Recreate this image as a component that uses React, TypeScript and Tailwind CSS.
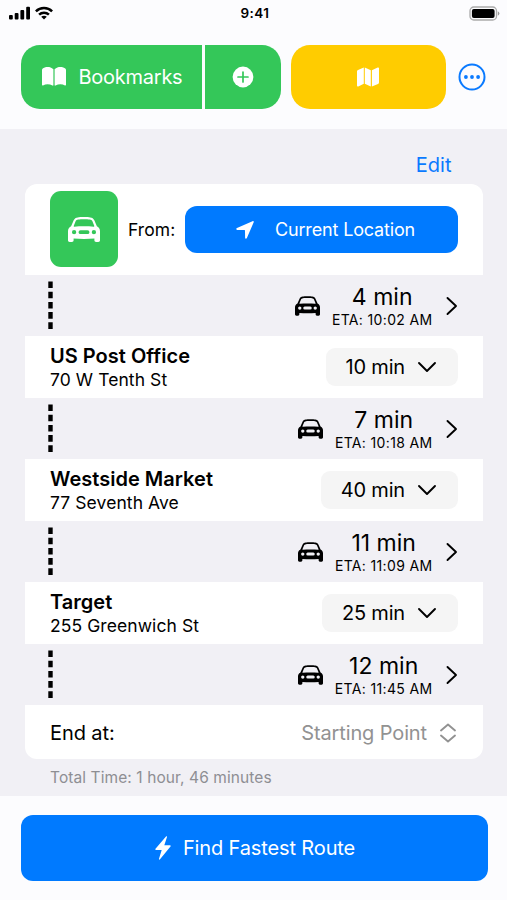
import React from "react";

function CarIcon({ className }: { className: string }) {
  return (
    <svg viewBox="0 0 32 25" className={className} fill="currentColor">
      <path
        fillRule="evenodd"
        d="M9.800 .4C12 0 20 0 22.200 .4c2 .3 3.300 1.100 4 2.700L28.900 9.300C31.200 10.700 32 12 32 14.500V23.200c0 1-.7 1.700-1.700 1.700h-2.200c-1 0-1.700-.7-1.700-1.700v-1.700C20 22 12 22 5.600 21.500v1.700c0 1-.7 1.700-1.700 1.700H1.700C.7 24.900 0 24.200 0 23.200V14.500C0 12 .8 10.700 3.100 9.300L5.800 3.100C6.500 1.500 7.800 .7 9.800 .4ZM10.300 2.500C8.800 2.700 8.100 3.100 7.700 4.100L5.700 9.100c-.1.500.2.700.700.650C12 9.100 20 9.100 25.600 9.750c.5.050.8-.15.700-.65L24.300 4.100c-.4-1-1.100-1.400-2.600-1.600C19 2.200 13 2.200 10.300 2.500ZM6.100 13a2.150 2.150 0 1 0 0 4.300a2.150 2.150 0 1 0 0-4.300ZM12.500 13.200a1.950 1.950 0 0 0 0 3.900H19.500a1.950 1.950 0 0 0 0-3.900ZM25.900 13a2.150 2.150 0 1 0 0 4.300a2.150 2.150 0 1 0 0-4.300Z"
      />
    </svg>
  );
}

function StatusBar() {
  return (
    <div className="grid h-[28px] grid-cols-3 items-center pr-[7px] pl-[9px]">
      <div className="-mt-[2px] flex items-center gap-[5px]">
        <svg viewBox="0 0 22 14" className="h-[14px] w-[22px]">
          <rect x="0" y="9" width="3.800" height="4.500" rx="1" />
          <rect x="5.700" y="7" width="3.800" height="6.500" rx="1" />
          <rect x="11.400" y="4" width="3.800" height="9.500" rx="1" />
          <rect x="17.200" y="0.800" width="3.800" height="12.700" rx="1" />
        </svg>
        <svg viewBox="0 0 18 14" className="-ml-px h-[14px] w-[18px]" fill="none" stroke="#000" strokeWidth="2.500">
          <path d="M.9 5.300C5.300.9 12.700.9 17.100 5.300" />
          <path d="M4.100 8.600c2.700-2.600 7.100-2.600 9.800 0" />
          <path d="M9 13.600 6.200 10.700c1.600-1.400 4-1.400 5.600 0Z" fill="#000" stroke="none" />
        </svg>
      </div>
      <div className="pl-px text-center text-[13.500px] leading-none font-semibold tracking-[0.4px]">9:41</div>
      <svg viewBox="0 0 31 15" className="-mt-[2px] h-[15px] w-[31px] justify-self-end">
        <rect x="1" y="1" width="26.500" height="13" rx="3.800" fill="none" stroke="#aaa" strokeWidth="1.300" />
        <rect x="2.900" y="2.900" width="22.700" height="9.200" rx="2" />
        <path d="M28.800 5.200q1.600 1 1.600 2.300t-1.600 2.300Z" fill="#999" />
      </svg>
    </div>
  );
}

function Header() {
  return (
    <div className="flex h-[101px] items-start pt-[16.500px] pl-[20.500px]">
      <button className="flex h-[64px] w-[181.500px] items-center rounded-l-[19px] bg-[#34c759] pl-[21px] text-white">
        <svg viewBox="0 0 24 19" className="h-[19px] w-[24px]" fill="currentColor">
          <path d="M11.400 2.200C9.600.6 7.600 0 5.800 0 3.500 0 1.600.7.700 1.600.2 2 0 2.500 0 3.100V17.800c0 .6.500.9 1 .6 3-1.700 6.500-1.600 9.500.1.500.3.900.1.900-.4ZM12.600 2.200C14.400.6 16.400 0 18.200 0c2.300 0 4.200.7 5.100 1.600.5.400.7.900.7 1.500V17.800c0 .6-.5.900-1 .6-3-1.700-6.500-1.600-9.500.1-.5.300-.9.100-.9-.4Z" />
        </svg>
        <span className="ml-[13px] text-[20px] tracking-[-0.250px]">Bookmarks</span>
      </button>
      <button className="ml-[2.500px] flex h-[64px] w-[76.500px] items-center justify-center rounded-r-[19px] bg-[#34c759]">
        <svg viewBox="0 0 22 22" className="h-[22px] w-[22px]">
          <circle cx="11" cy="11" r="10.400" fill="#fff" />
          <path d="M11 6v10M6 11h10" stroke="#34c759" strokeWidth="1.700" strokeLinecap="round" />
        </svg>
      </button>
      <button className="ml-[10px] flex h-[64px] w-[154.500px] items-center justify-center rounded-[19px] bg-[#ffcc00]">
        <svg viewBox="0 0 22 20" className="h-[20px] w-[22px]" fill="#fff">
          <path d="M6.800.6V16.800L1.300 19.400c-.8.300-1.300 0-1.300-.8V4.700c0-.9.300-1.300 1-1.700ZM7.800.6l6 2.700V19.400l-6-2.600ZM14.900 3.300 20.700.5c.8-.3 1.300 0 1.300.8V15.200c0 .9-.3 1.300-1 1.700l-6.100 2.500Z" />
        </svg>
      </button>
      <svg viewBox="0 0 28 28" className="mt-[18.500px] ml-[12px] h-[28px] w-[28px]" fill="#0a7aff">
        <circle cx="14" cy="14" r="12.500" fill="none" stroke="#0a7aff" strokeWidth="2" />
        <circle cx="7.900" cy="14" r="1.900" />
        <circle cx="14" cy="14" r="1.900" />
        <circle cx="20.100" cy="14" r="1.900" />
      </svg>
    </div>
  );
}

function Leg({ time, eta }: { time: string; eta: string }) {
  return (
    <div className="flex h-[61.500px] items-center pr-[25.500px] pl-[22.500px]">
      <svg viewBox="0 0 5 48" className="h-[48px] w-[5px]">
        <path d="M2.500 0.500V48" stroke="#000" strokeWidth="4.400" strokeDasharray="6.600 3.600" />
      </svg>
      <CarIcon className="mt-[2px] ml-auto h-[20px] w-[25px]" />
      <div className="ml-[11.500px] pt-[4px] text-center">
        <div className="text-[23px] leading-[25px] tracking-[0px]">{time}</div>
        <div className="text-[14px] leading-[20px] tracking-[0.350px]">{eta}</div>
      </div>
      <svg viewBox="0 0 12 20" className="mt-px ml-[13px] h-[20px] w-[12px]" fill="none" stroke="#000" strokeWidth="1.900" strokeLinecap="round" strokeLinejoin="round">
        <path d="M1.500 2l8.500 8L1.500 18" />
      </svg>
    </div>
  );
}

function Stop({ name, address, stay }: { name: string; address: string; stay: string }) {
  return (
    <div className="flex h-[61.500px] items-center justify-between bg-white pr-[25px] pl-[25px]">
      <div className="pt-[2px]">
        <div className="text-[20px] leading-[24px] font-semibold tracking-[0.020px]">{name}</div>
        <div className="text-[17.500px] leading-[23px] tracking-[0.080px]">{address}</div>
      </div>
      <div className="flex h-[38px] items-center rounded-[9px] bg-[#f5f5f5] pr-[21px] pl-[20px]">
        <span className="text-[20px] tracking-[-0.180px]">{stay}</span>
        <svg viewBox="0 0 20 12" className="ml-[12px] h-[12px] w-[20px]" fill="none" stroke="#000" strokeWidth="1.900" strokeLinecap="round" strokeLinejoin="round">
          <path d="M2 2l8 8 8-8" />
        </svg>
      </div>
    </div>
  );
}

export default function App() {
  return (
    <div className="flex h-[900px] w-[507px] flex-col overflow-hidden bg-[#fcfcfe] font-['Inter',sans-serif] whitespace-nowrap text-black">
      <StatusBar />
      <Header />
      <main className="h-[667px] bg-[#f1f0f5] pr-[24px] pl-[25px]">
        <div className="flex h-[55px] items-center justify-end pt-[16px] pr-[31.500px] text-[20px] text-[#0a7aff]">Edit</div>
        <div className="overflow-hidden rounded-[12px]">
          <div className="flex h-[90.500px] items-center bg-white px-[25px]">
            <div className="flex h-[76px] w-[68px] items-center justify-center rounded-[11px] bg-[#34c759] text-white">
              <CarIcon className="h-[25px] w-[32px]" />
            </div>
            <span className="ml-[10px] pt-px text-[17.500px] tracking-[0.050px]">From:</span>
            <button className="ml-auto flex h-[47px] w-[273px] items-center rounded-[12px] bg-[#007aff] pl-[50.500px] text-white">
              <svg viewBox="0 0 18 18" className="mt-px h-[18px] w-[18px]" fill="currentColor">
                <path d="M16.500.2c1-.4 1.500.2 1.200 1.100L10.900 17c-.5 1.200-1.800 1-1.800-.2L9 9.600c0-.4-.2-.6-.6-.6L1.200 8.900C0 8.900-.2 7.600 1 7.100Z" />
              </svg>
              <span className="ml-[21.500px] text-[18px] tracking-[-0.160px]">Current Location</span>
            </button>
          </div>
          <Leg time="4 min" eta="ETA: 10:02 AM" />
          <Stop name="US Post Office" address="70 W Tenth St" stay="10 min" />
          <Leg time="7 min" eta="ETA: 10:18 AM" />
          <Stop name="Westside Market" address="77 Seventh Ave" stay="40 min" />
          <Leg time="11 min" eta="ETA: 11:09 AM" />
          <Stop name="Target" address="255 Greenwich St" stay="25 min" />
          <Leg time="12 min" eta="ETA: 11:45 AM" />
          <div className="flex h-[54px] items-center justify-between bg-white pt-px pr-[26px] pl-[25px] text-[20px]">
            <span className="tracking-[-0.1px]">End at:</span>
            <div className="flex items-center gap-[12px] text-[#929292]">
              <span className="tracking-[-0.120px]">Starting Point</span>
              <svg viewBox="0 0 18 20" className="h-[20px] w-[18px]" fill="none" stroke="currentColor" strokeWidth="1.900" strokeLinecap="round" strokeLinejoin="round">
                <path d="M2 7.500l7-6 7 6M2 12.500l7 6 7-6" />
              </svg>
            </div>
          </div>
        </div>
        <div className="mt-[9px] pl-[25px] text-[15.500px] leading-[20px] tracking-[0.090px] text-[#8e8e93]">Total Time: 1 hour, 46 minutes</div>
      </main>
      <footer className="flex-1 pt-[19px] pl-[20.500px]">
        <button className="flex h-[65.500px] w-[467px] items-center justify-center gap-[12px] rounded-[12px] bg-[#007aff] pl-[2px] text-white">
          <svg viewBox="0 0 16 24" className="h-[24px] w-[16px]" fill="currentColor">
            <path d="M11 .5c.6-.7 1.300-.3 1 .6L9.300 9.300h5.600c.8 0 1.100.7.600 1.300L5 23.300c-.6.700-1.300.3-1-.6L6.700 14H1.100c-.8 0-1.100-.7-.6-1.300Z" />
          </svg>
          <span className="text-[20px] tracking-[-0.130px]">Find Fastest Route</span>
        </button>
      </footer>
    </div>
  );
}
